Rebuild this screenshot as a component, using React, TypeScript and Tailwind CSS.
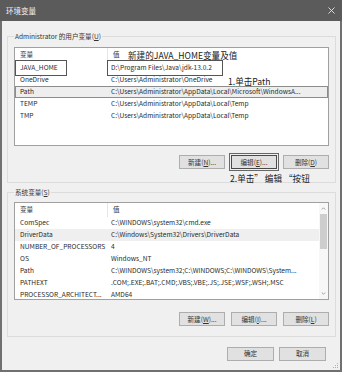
import React from "react";

const userVars = [
  ["JAVA_HOME", "D:\\Program Files\\Java\\jdk-13.0.2"],
  ["OneDrive", "C:\\Users\\Administrator\\OneDrive"],
  ["Path", "C:\\Users\\Administrator\\AppData\\Local\\Microsoft\\WindowsA..."],
  ["TEMP", "C:\\Users\\Administrator\\AppData\\Local\\Temp"],
  ["TMP", "C:\\Users\\Administrator\\AppData\\Local\\Temp"],
];

const sysVars = [
  ["ComSpec", "C:\\WINDOWS\\system32\\cmd.exe"],
  ["DriverData", "C:\\Windows\\System32\\Drivers\\DriverData"],
  ["NUMBER_OF_PROCESSORS", "4"],
  ["OS", "Windows_NT"],
  ["Path", "C:\\WINDOWS\\system32;C:\\WINDOWS;C:\\WINDOWS\\System..."],
  ["PATHEXT", ".COM;.EXE;.BAT;.CMD;.VBS;.VBE;.JS;.JSE;.WSF;.WSH;.MSC"],
  ["PROCESSOR_ARCHITECT...", "AMD64"],
];

function Btn({ label, hotkey, dots, focused }: { label: string; hotkey?: string; dots?: boolean; focused?: boolean }) {
  return (
    <div
      className={`w-[46px] h-[14px] flex items-center justify-center bg-[#e1e1e1] border text-[6.6px] leading-none text-[#333] ${
        focused ? "border-[#4a4a4a] outline outline-1 outline-offset-[1px] outline-[#666]" : "border-[#adadad]"
      }`}
    >
      {label}
      {hotkey && (
        <>
          (<span className="underline">{hotkey}</span>)
        </>
      )}
      {dots && "..."}
    </div>
  );
}

function Header() {
  return (
    <div className="flex h-[14px] items-center text-[6.6px] text-[#333]">
      <div className="w-[93px] h-full pl-[5px] flex items-center border-r border-[#e5e5e5]">变量</div>
      <div className="pl-[5px]">值</div>
    </div>
  );
}

function Row({ name, value, active, hover }: { name: string; value: string; active?: boolean; hover?: boolean }) {
  return (
    <div
      className={`flex h-[12px] items-center text-[6.6px] text-[#2a2a2a] whitespace-nowrap border ${
        active ? "bg-[#eeeeee] border-[#8c8c8c]" : hover ? "bg-[#efefef] border-transparent" : "border-transparent"
      }`}
    >
      <div className="w-[95px] pl-[4px] shrink-0">{name}</div>
      <div>{value}</div>
    </div>
  );
}

export default function App() {
  return (
    <div className="w-[342px] h-[372px] bg-[#707070] flex flex-col font-['Noto_Sans_CJK_SC','Noto_Sans',sans-serif] overflow-hidden">
      {/* Title bar */}
      <div className="h-[21px] bg-[#5b5b5b] flex items-center justify-between pl-[6px] pr-[6px] text-[#f2f2f2]">
        <span className="text-[7.5px]">环境变量</span>
        <svg width="7" height="7" viewBox="0 0 7 7" className="mr-[1px]">
          <path d="M0.5 0.5 L6.5 6.5 M6.5 0.5 L0.5 6.5" stroke="#e8e8e8" strokeWidth="0.9" />
        </svg>
      </div>

      {/* Body */}
      <div className="relative flex-1 mx-[2px] mb-[2px] bg-[#f0f0f0] pt-[10px]">
        {/* User variables */}
        <fieldset className="ml-[5px] w-[329px] border border-[#dcdcdc] px-[6px] pb-[13px]">
          <legend className="px-[1px] text-[6.6px] leading-[11px] text-[#333]">
            Administrator 的用户变量(<span className="underline">U</span>)
          </legend>
          <div className="relative mt-[5px] h-[99px] bg-white border border-[#a0a0a0]">
            <Header />
            {userVars.map(([n, v]) => (
              <Row key={n} name={n} value={v} active={n === "Path"} />
            ))}
            {/* annotations */}
            <div className="absolute left-[0px] top-[12px] w-[52px] h-[16px] border border-[#555]" />
            <div className="absolute left-[92px] top-[12px] w-[116px] h-[16px] border border-[#555]" />
            <div className="absolute left-[113px] top-[1px] text-[8.6px] leading-[12px] text-[#222] whitespace-nowrap">
              新建的JAVA_HOME变量及值
            </div>
            <div className="absolute left-[213px] top-[27px] text-[8.6px] leading-[12px] text-[#222] whitespace-nowrap">
              1.单击Path
            </div>
          </div>
          <div className="relative mt-[9px] flex justify-end gap-[6px]">
            <Btn label="新建" hotkey="N" dots />
            <Btn label="编辑" hotkey="E" dots focused />
            <Btn label="删除" hotkey="D" />
            <div className="absolute left-[216px] top-[17px] text-[8.6px] leading-[12px] text-[#222] whitespace-nowrap">
              2.单击” 编辑 “按钮
            </div>
          </div>
        </fieldset>

        {/* System variables */}
        <fieldset className="mt-[4px] ml-[5px] w-[329px] border border-[#dcdcdc] px-[6px] pb-[10px]">
          <legend className="px-[1px] text-[6.6px] leading-[11px] text-[#333]">
            系统变量(<span className="underline">S</span>)
          </legend>
          <div className="mt-[4px] h-[98px] bg-white border border-[#a0a0a0] flex">
            <div className="flex-1 min-w-0 overflow-hidden">
              <Header />
              {sysVars.map(([n, v]) => (
                <Row key={n + v} name={n} value={v} hover={n === "DriverData"} />
              ))}
            </div>
            <div className="w-[9px] flex flex-col items-center bg-[#f7f7f7]">
              <svg width="5" height="9" viewBox="0 0 5 9" className="mt-[1px]">
                <path d="M0.8 5.5 L2.5 3.8 L4.2 5.5" fill="none" stroke="#8a8a8a" strokeWidth="0.8" />
              </svg>
              <div className="mt-[1px] w-[7px] h-[35px] bg-[#cdcdcd]" />
              <div className="flex-1" />
              <svg width="5" height="9" viewBox="0 0 5 9" className="mb-[1px]">
                <path d="M0.8 3.5 L2.5 5.2 L4.2 3.5" fill="none" stroke="#8a8a8a" strokeWidth="0.8" />
              </svg>
            </div>
          </div>
          <div className="mt-[12px] flex justify-end gap-[6px]">
            <Btn label="新建" hotkey="W" dots />
            <Btn label="编辑" hotkey="I" dots />
            <Btn label="删除" hotkey="L" />
          </div>
        </fieldset>

        {/* Dialog buttons */}
        <div className="mt-[10px] pr-[14px] flex justify-end gap-[5px]">
          <div className="w-[47px] h-[14px] flex items-center justify-center bg-[#e1e1e1] border border-[#adadad] text-[6.6px] text-[#333]">
            确定
          </div>
          <div className="w-[47px] h-[14px] flex items-center justify-center bg-[#e1e1e1] border border-[#adadad] text-[6.6px] text-[#333]">
            取消
          </div>
        </div>

        {/* size grip */}
        <svg width="6" height="6" viewBox="0 0 6 6" className="absolute right-[1px] bottom-[1px]">
          <rect x="4" y="0" width="1" height="1" fill="#b0b0b0" />
          <rect x="2" y="2" width="1" height="1" fill="#b0b0b0" />
          <rect x="4" y="2" width="1" height="1" fill="#b0b0b0" />
          <rect x="0" y="4" width="1" height="1" fill="#b0b0b0" />
          <rect x="2" y="4" width="1" height="1" fill="#b0b0b0" />
          <rect x="4" y="4" width="1" height="1" fill="#b0b0b0" />
        </svg>
      </div>
    </div>
  );
}
